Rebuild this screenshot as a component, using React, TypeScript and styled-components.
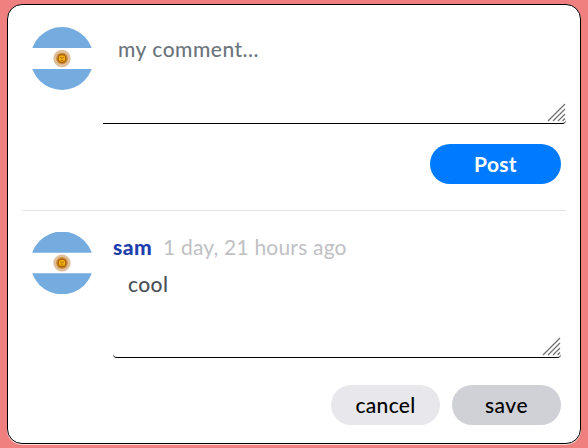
import React from 'react';
import styled, { createGlobalStyle } from 'styled-components';

const GlobalStyle = createGlobalStyle`
  * { box-sizing: border-box; }
  body {
    margin: 0;
    height: 448px;
    overflow: hidden;
    background: #f08080;
    font-family: Lato, "Noto Sans", sans-serif;
    font-size: 21px;
  }
`;

const Card = styled.main`
  width: 574px;
  height: 440px;
  margin: 4px 0 0 7px;
  padding: 0 14px;
  border: 1px solid #000;
  border-radius: 15px;
  background: #fff;
  box-shadow: 0 1px 0 rgba(255, 255, 255, 0.7);
`;

const Composer = styled.section`
  display: flex;
  flex-direction: column;
  height: 206px;
  padding-top: 22px;
  border-bottom: 1px solid #e1e1e3;
`;

const Comment = styled.section`
  display: flex;
  flex-direction: column;
  padding-top: 21px;
`;

const Row = styled.div<{ $gap: number }>`
  display: flex;
  align-items: flex-start;
  gap: ${(p) => p.$gap}px;
  padding-left: 9px;
`;

const FlagSvg = styled.svg`
  flex: none;
  display: block;
  clip-path: circle(31.5px at 50% 50%);
`;

const Body = styled.div`
  display: flex;
  flex-direction: column;
`;

const Field = styled.div<{ $width: number; $height: number }>`
  position: relative;
  width: ${(p) => p.$width}px;
  height: ${(p) => p.$height}px;
`;

const TextArea = styled.textarea<{ $radius: string; $spacing: number }>`
  display: block;
  width: 100%;
  height: 100%;
  padding: 7px 15px;
  border: 0;
  border-bottom: 1px solid #000;
  border-radius: ${(p) => p.$radius};
  outline: 0;
  resize: none;
  overflow: hidden;
  background: transparent;
  color: #495057;
  font: inherit;
  font-weight: 500;
  line-height: 30px;
  letter-spacing: ${(p) => p.$spacing}px;
  &::placeholder { color: #6c757d; opacity: 1; }
`;

const GripSvg = styled.svg`
  position: absolute;
  right: 0;
  bottom: 1px;
`;

const Meta = styled.header`
  display: flex;
  align-items: center;
  gap: 9px;
  height: 30px;
  padding-bottom: 2px;
`;

const Author = styled.strong`
  width: 41px;
  color: #1e40af;
  font-weight: 900;
  letter-spacing: 0.5px;
`;

const Time = styled.time`
  color: #c0c0c4;
  white-space: nowrap;
  letter-spacing: 0.2px;
`;

const Actions = styled.div<{ $top: number }>`
  display: flex;
  justify-content: flex-end;
  gap: 12px;
  margin-top: ${(p) => p.$top}px;
  padding-right: 5px;
`;

const Button = styled.button<{ $bg: string; $color?: string; $width?: number; $weight?: number; $spacing?: number }>`
  width: ${(p) => p.$width ?? 109}px;
  height: 40px;
  padding: 0 0 2px;
  border: 0;
  border-radius: 20px;
  background: ${(p) => p.$bg};
  color: ${(p) => p.$color ?? '#000'};
  font: inherit;
  font-weight: ${(p) => p.$weight ?? 500};
  letter-spacing: ${(p) => p.$spacing ?? 0}px;
`;

const Avatar = ({ size }: { size: number }) => (
  <FlagSvg width={62} height={size} viewBox="0 0 62 63" preserveAspectRatio="none" aria-label="Argentina">
    <path fill="#fff" d="M0 0h62v63H0z" />
    <path fill="#74acdf" d="M1 0h60v21H1zM1 42h60v21H1z" />
    <circle cx="31" cy="31.5" r="7.3" fill="none" stroke="#c78a4b" strokeOpacity=".55" strokeWidth="2.8" />
    <circle cx="31" cy="31.5" r="6" fill="#c98d3e" />
    <circle cx="31" cy="31.5" r="3.9" fill="#f6b40e" stroke="#a85d08" strokeWidth="1.3" />
    <path d="M29 30.5h1.5m1 0H33m-2 0v2m-1.3 1h2.6" fill="none" stroke="#a85d08" strokeWidth=".8" />
  </FlagSvg>
);

const Grip = () => (
  <GripSvg width="19" height="20" viewBox="0 0 19 20" aria-hidden="true">
    <path d="M1 18 18 1M6 18 18 6M11 18l7-7M15.5 18l2.5-2.5" fill="none" stroke="#737373" strokeWidth="1.3" />
  </GripSvg>
);

export default function App() {
  return (
    <>
      <GlobalStyle />
      <Card>
        <Composer>
          <Row $gap={10}>
            <Avatar size={63} />
            <Field $width={463} $height={97}>
              <TextArea $radius="0 0 4px 0" $spacing={0.5} placeholder="my comment..." />
              <Grip />
            </Field>
          </Row>
          <Actions $top={20}>
            <Button $bg="#007bff" $color="#fff" $width={131} $weight={700} $spacing={0.3}>Post</Button>
          </Actions>
        </Composer>
        <Comment>
          <Row $gap={20}>
            <Avatar size={62} />
            <Body>
              <Meta>
                <Author>sam</Author>
                <Time>1 day, 21 hours ago</Time>
              </Meta>
              <Field $width={448} $height={96}>
                <TextArea $radius="4px" $spacing={0.4} defaultValue="cool" />
                <Grip />
              </Field>
            </Body>
          </Row>
          <Actions $top={27}>
            <Button $bg="#e8e8ec" $spacing={0.3}>cancel</Button>
            <Button $bg="#d0d1d6" $spacing={0.5}>save</Button>
          </Actions>
        </Comment>
      </Card>
    </>
  );
}
